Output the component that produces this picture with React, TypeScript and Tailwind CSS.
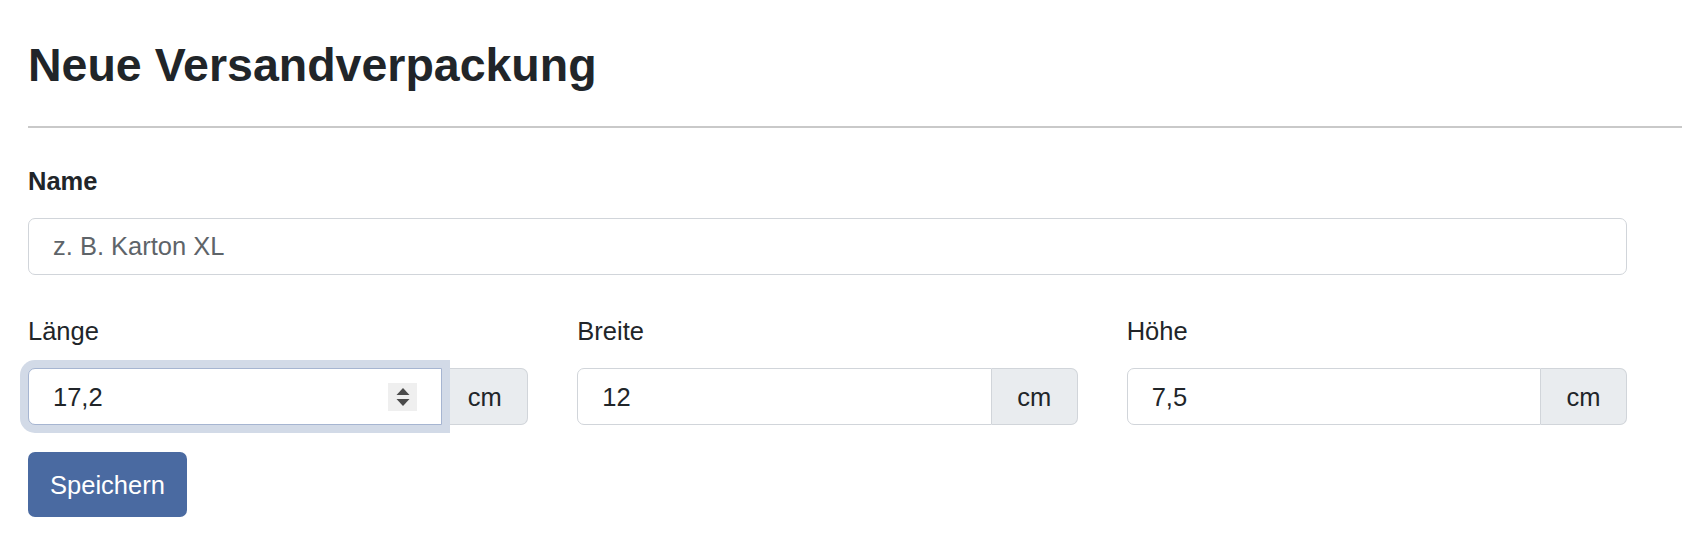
import React from "react";

interface DimProps {
  label: string;
  value: string;
  focused?: boolean;
}

const Spinner = () => (
  <div className="flex h-[28px] w-[29px] items-center justify-center bg-[#efefef]">
    <svg width="14" height="22" viewBox="0 0 14 22">
      <path d="M7 2 L13.5 9 L0.5 9 Z" fill="#4b4b4b" />
      <path d="M0.5 13 L13.5 13 L7 20 Z" fill="#4b4b4b" />
    </svg>
  </div>
);

const DimField: React.FC<DimProps> = ({ label, value, focused }) => {
  return (
    <div>
      <label className="block leading-[1.5] mb-[18px]">{label}</label>
      <div className="flex h-[57px]">
        <div
          className={`relative flex flex-1 items-center rounded-l-[7px] border-[1.5px] bg-white pl-[24px] pr-[24px] ${
            focused
              ? "z-10 border-[#a6b5d1] ring-[8px] ring-[#d2dae7]"
              : "border-[#d1d5da]"
          }`}
        >
          <span className="flex-1">{value}</span>
          {focused && <Spinner />}
        </div>
        <div className="flex w-[86px] items-center justify-center rounded-r-[7px] border-[1.5px] border-l-0 border-[#d1d5da] bg-[#e9ecef]">
          cm
        </div>
      </div>
    </div>
  );
};

export default function App() {
  return (
    <div className="min-h-screen bg-white pt-[38px] pl-[28px] font-['Liberation_Sans',Arial,sans-serif] text-[25.5px] text-[#212529]">
      <h1 className="text-[46.5px] font-bold leading-[1.2]">Neue Versandverpackung</h1>
      <hr className="mt-[32px] border-t-2 border-[#c9c9c9]" />

      <div className="mr-[55px]">
        <label className="mt-[34px] mb-[18px] block font-bold leading-[1.5]">Name</label>
        <input
          type="text"
          placeholder="z. B. Karton XL"
          className="block h-[57px] w-full rounded-[7px] border-[1.5px] border-[#d1d5da] px-[24px] placeholder:text-[#5e6469] outline-none"
        />

        <div className="mt-[37px] grid grid-cols-3 gap-x-[49px]">
          <DimField label="Länge" value="17,2" focused />
          <DimField label="Breite" value="12" />
          <DimField label="Höhe" value="7,5" />
        </div>

        <button className="mt-[27px] h-[65px] w-[159px] rounded-[7px] bg-[#4a6aa1] text-white">
          Speichern
        </button>
      </div>
    </div>
  );
}
